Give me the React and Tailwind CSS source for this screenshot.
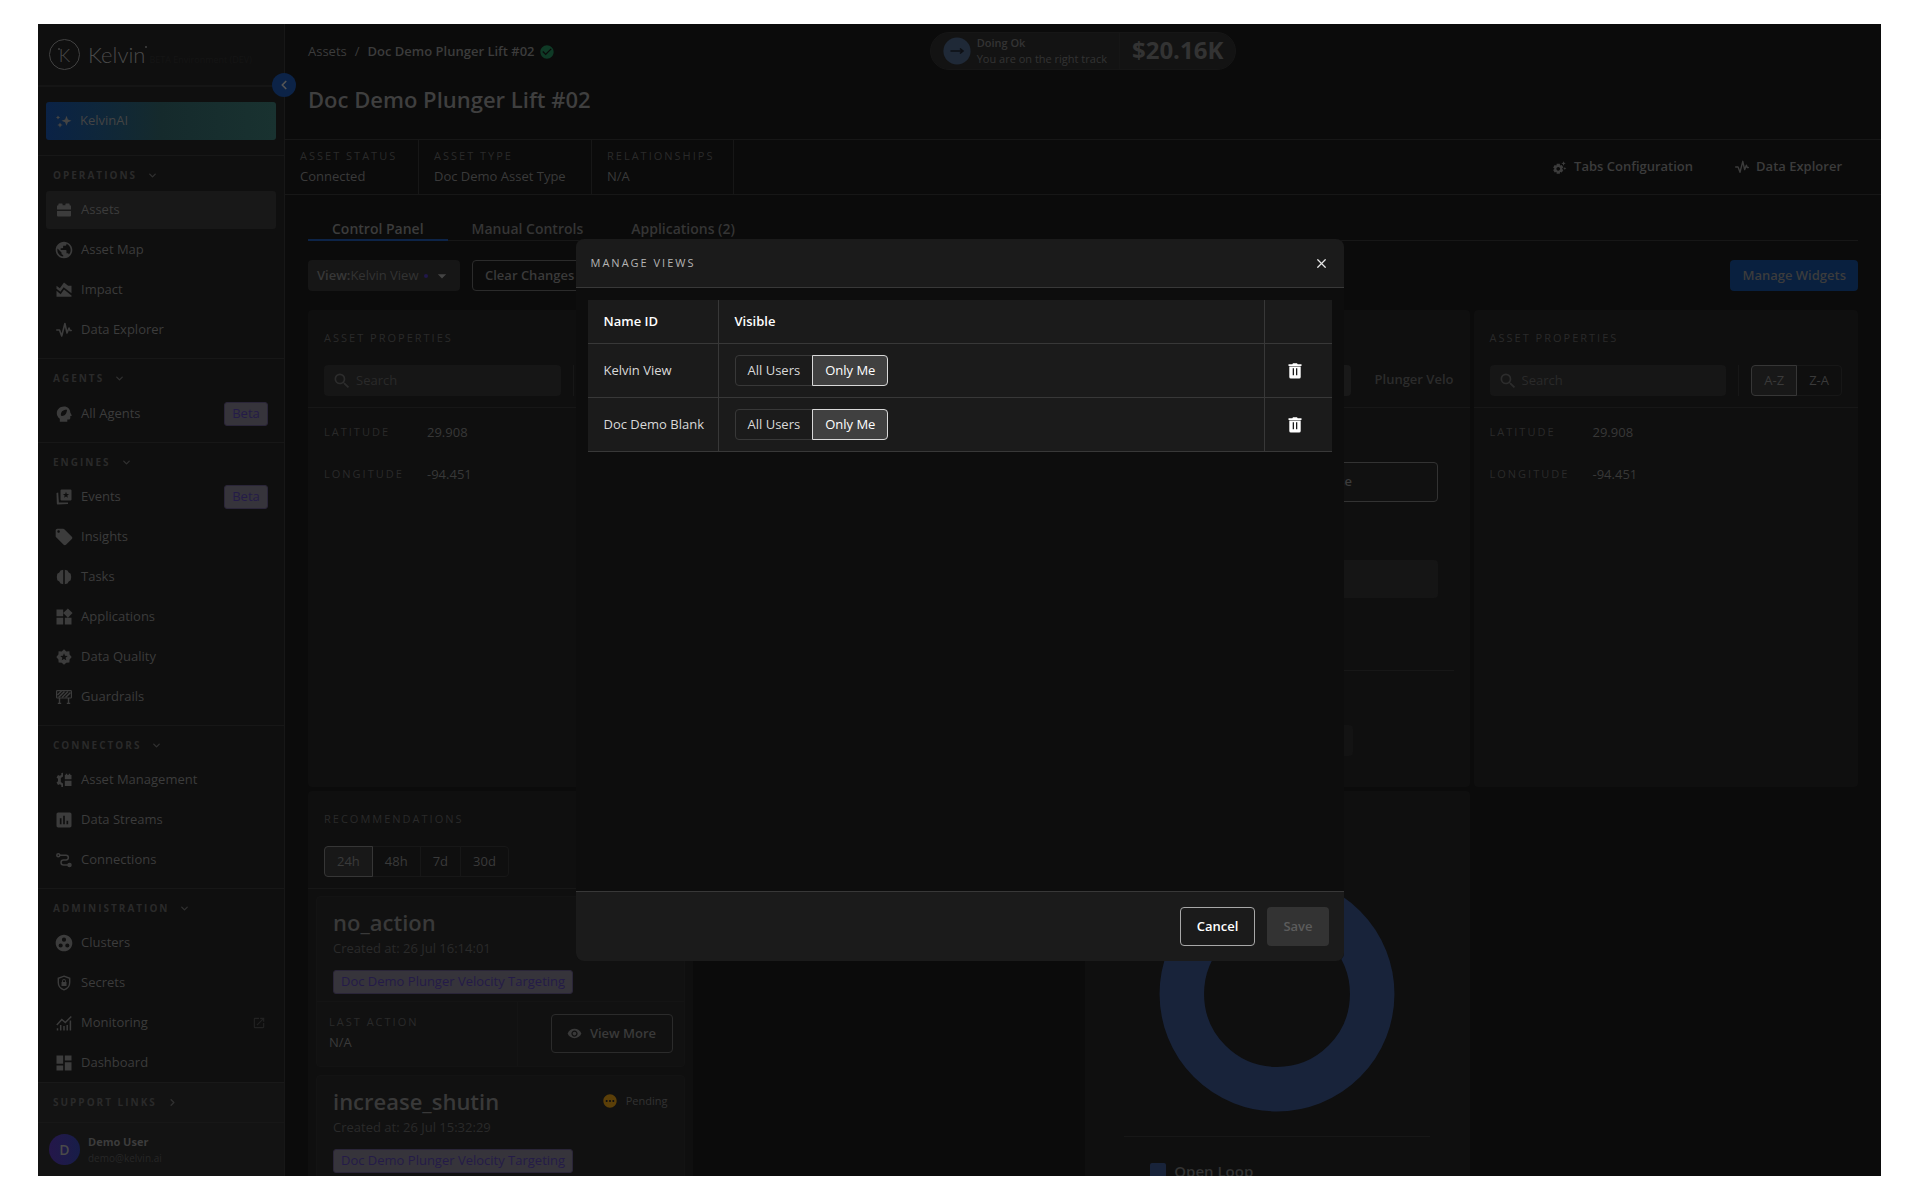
import { useState } from "react";

import clsx from "clsx";
import {
    MdAreaChart,
    MdArrowDropDown,
    MdAssessment,
    MdCheckCircle,
    MdDashboard,
    MdGroupWork,
    MdLocalOffer,
    MdOpenInNew,
    MdPending,
    MdPublic,
    MdRemoveRedEye,
    MdSearch,
    MdSettingsSuggest,
    MdWidgets,
} from "react-icons/md";
import { ChevronDown, ChevronLeft, ChevronRight, X } from "lucide-react";

function SparklesIcon({ className }) {
    return (
        <svg viewBox="0 0 16 16" className={className} fill="currentColor" aria-hidden="true">
            <path d="M10.5 2.8l1.4 3.6 3.6 1.4-3.6 1.4-1.4 3.6-1.4-3.6-3.6-1.4 3.6-1.4z" />
            <path d="M4 9.400l.9 1.900 1.900.7-1.900.8L4 14.700l-.9-1.900-1.900-.8 1.900-.7z" />
            <path d="M2 2.400l.7 1.400 1.400.7-1.400.7L2 6.600l-.7-1.400L0 4.500l1.300-.7z" />
        </svg>
    );
}

function BrickIcon({ className }) {
    return (
        <svg viewBox="0 0 16 16" className={className} fill="currentColor" aria-hidden="true">
            <path d="M3 1.500h3a.6.6 0 01.6.6v1.100h2.800V2.100a.6.6 0 01.6-.6h3a.6.6 0 01.6.6v1.100h.4a1 1 0 011 1v3.200H1V4.200a1 1 0 011-1h.4V2.100a.6.6 0 01.6-.6z" />
            <path d="M1 8.900h14v4.600a1 1 0 01-1 1H2a1 1 0 01-1-1z" />
        </svg>
    );
}

function PulseIcon({ className }) {
    return (
        <svg
            viewBox="0 0 16 16"
            className={className}
            fill="none"
            stroke="currentColor"
            strokeWidth="1.6"
            strokeLinejoin="round"
            strokeLinecap="round"
            aria-hidden="true"
        >
            <path d="M.8 8h2.700l2.200 6L8.900 1.500l2.100 9.500 2-5 1 2.500h1.200" />
        </svg>
    );
}

function AgentIcon({ className }) {
    return (
        <svg viewBox="0 0 16 16" className={className} fill="currentColor" fillRule="evenodd" aria-hidden="true">
            <path d="M8 .5c3.800 0 6.300 2.700 6.300 6l1.400 2.700c.2.4 0 .7-.4.7h-1v2.200c0 .9-.6 1.500-1.500 1.500h-1.500v2.200H3.800v-3C2 11.300.8 9.500.8 7.200.8 3.400 4 .5 8 .5zM5 9.800c3.500.6 5.700-1.600 6-6C7 3.600 4.300 5.800 5 9.800z" />
        </svg>
    );
}

function EventsIcon({ className }) {
    return (
        <svg viewBox="0 0 16 16" className={className} fill="currentColor" fillRule="evenodd" aria-hidden="true">
            <path d="M5.500.5h9a1 1 0 011 1v9a1 1 0 01-1 1h-9a1 1 0 01-1-1v-9a1 1 0 011-1zM10 2.800L9.200 5l-2.300.1 1.800 1.400-.6 2.200L10 7.400l1.900 1.300-.6-2.200 1.800-1.400-2.300-.1z" />
            <path d="M.5 4l1.700-.4.7 10H12v1.500l-10.200.4a1 1 0 01-1-1z" />
        </svg>
    );
}

function TasksIcon({ className }) {
    return (
        <svg viewBox="0 0 16 16" className={className} fill="currentColor" aria-hidden="true">
            <path d="M7.200.8v14.400L4.500 14.400l-1.200-2-2-1.200L.8 8l.5-3.200 2-1.200 1.200-2z" />
            <path d="M8.800.8v14.400l2.700-.8 1.200-2 2-1.200.5-3.200-.5-3.200-2-1.200-1.200-2z" />
        </svg>
    );
}

function QualityIcon({ className }) {
    return (
        <svg viewBox="0 0 16 16" className={className} fill="currentColor" fillRule="evenodd" aria-hidden="true">
            <path d="M8 .3l2.300 2.100 3.100-.1.200 3.200L15.700 8l-2.100 2.500-.2 3.100-3.100.1L8 15.700l-2.300-2-3.100-.1-.2-3.100L.3 8l2.100-2.500.2-3.200 3.100.1zM8 4.300l-1 2.500-2.700.2 2.100 1.700-.7 2.600L8 9.900l2.300 1.400-.7-2.600L11.700 7 9 6.800z" />
        </svg>
    );
}

function BarrierIcon({ className }) {
    return (
        <svg viewBox="0 0 16 16" className={className} fill="none" stroke="currentColor" aria-hidden="true">
            <rect x=".6" y="1.600" width="14.800" height="7.400" rx=".8" strokeWidth="1.200" />
            <path d="M1.500 6l4-4M2.500 8.500l6-6M6 8.500l6-6M9.500 8.500l5-5" strokeWidth="1.500" />
            <path d="M3.500 9v5.500M12.500 9v5.500M1.800 14.400h3.400M10.800 14.400h3.400" strokeWidth="1.400" />
        </svg>
    );
}

function AssetMgmtIcon({ className }) {
    return (
        <svg viewBox="0 0 16 16" className={className} fill="currentColor" aria-hidden="true">
            <path d="M7 .8L5.300 1v1.900L3.700 3.800 2 3 .5 5.400l1.500 1.300v2.600L.5 10.600 2 13l1.700-.8 1.600.9V15H7v-3.500L4.800 9.900V6.100L7 4.500z" />
            <path d="M8.800 3h.9V1.800h1.600V3h1.400V1.800h1.600V3h1.200v4.300H8.800zM8.800 8.800h6.700v5.300H8.800z" />
        </svg>
    );
}

function RouteIcon({ className }) {
    return (
        <svg viewBox="0 0 16 16" className={className} fill="none" stroke="currentColor" strokeWidth="1.500" aria-hidden="true">
            <circle cx="2.300" cy="3.200" r="1.500" />
            <path d="M4 3.200h6a2.300 2.300 0 010 4.700H7.500a2.500 2.500 0 000 5H12" />
            <circle cx="13.500" cy="12.900" r="1.500" fill="currentColor" />
        </svg>
    );
}

function SecretsIcon({ className }) {
    return (
        <svg viewBox="0 0 16 16" className={className} fill="currentColor" aria-hidden="true">
            <path
                d="M8 1.200l5.700 2.100v4.200c0 3.500-2.300 6.200-5.700 7.300-3.400-1.100-5.700-3.800-5.700-7.300V3.300z"
                fill="none"
                stroke="currentColor"
                strokeWidth="1.400"
            />
            <path d="M5.500 7h.6V6a1.900 1.900 0 013.800 0v1h.6v4h-5zM7 7h2V6a1 1 0 00-2 0z" fillRule="evenodd" />
        </svg>
    );
}

function MonitoringIcon({ className }) {
    return (
        <svg viewBox="0 0 16 16" className={className} fill="none" stroke="currentColor" strokeWidth="1.500" aria-hidden="true">
            <path d="M.8 10l5-5.500 3.500 3L15.300 1.500" />
            <path d="M1.500 15.500v-2.300M4.700 15.500V10M8 15.500v-4.500M11.200 15.500V10M14.400 15.500V5.500" />
        </svg>
    );
}

function TrashIcon({ className }) {
    return (
        <svg viewBox="0 0 14 16" className={className} fill="currentColor" fillRule="evenodd" aria-hidden="true">
            <path d="M.5 1.200h3.800L5 .3h4l.7.900h3.800v1.900H.5zM1.300 3.600h11.400v10.400a1.600 1.600 0 01-1.600 1.600H2.900a1.600 1.600 0 01-1.600-1.600zM4.700 5.200v7h1.300v-7zM8 5.200v7h1.300v-7z" />
        </svg>
    );
}

// `wide` marks the Material glyphs, which carry padding inside their own box
const sections = [
    {
        title: "Operations",
        items: [
            { label: "Assets", icon: BrickIcon, active: true },
            { label: "Asset Map", icon: MdPublic, wide: true },
            { label: "Impact", icon: MdAreaChart, wide: true },
            { label: "Data Explorer", icon: PulseIcon },
        ],
    },
    { title: "Agents", roomy: true, items: [{ label: "All Agents", icon: AgentIcon, beta: true }] },
    {
        title: "Engines",
        items: [
            { label: "Events", icon: EventsIcon, beta: true },
            { label: "Insights", icon: MdLocalOffer, wide: true },
            { label: "Tasks", icon: TasksIcon },
            { label: "Applications", icon: MdWidgets, wide: true },
            { label: "Data Quality", icon: QualityIcon },
            { label: "Guardrails", icon: BarrierIcon },
        ],
    },
    {
        title: "Connectors",
        items: [
            { label: "Asset Management", icon: AssetMgmtIcon },
            { label: "Data Streams", icon: MdAssessment, wide: true },
            { label: "Connections", icon: RouteIcon },
        ],
    },
    {
        title: "Administration",
        items: [
            { label: "Clusters", icon: MdGroupWork, wide: true },
            { label: "Secrets", icon: SecretsIcon },
            { label: "Monitoring", icon: MonitoringIcon, external: true },
            { label: "Dashboard", icon: MdDashboard, wide: true },
        ],
    },
];

const recommendations = [
    { name: "no_action", created: "26 Jul 16:14:01" },
    { name: "increase_shutin", created: "26 Jul 15:32:29", pending: true },
];

const views = ["Kelvin View", "Doc Demo Blank"];

function NavItem({ item }) {
    const Icon = item.icon;
    return (
        <a
            href="#"
            className={clsx(
                "flex items-center h-[38px] rounded-[3px] pl-2.5 pr-2 text-[13px] text-[#3c3c3c]",
                item.active && "bg-[#181818]"
            )}
        >
            <span className="size-4 mr-[9px] shrink-0 flex items-center justify-center">
                <Icon className={clsx("shrink-0", item.wide ? "size-5" : "size-4")} />
            </span>
            {item.label}
            {item.beta && (
                <span className="ml-auto h-6 w-11 flex items-center justify-center rounded-[3px] border border-[#2a2538] bg-[#36343b] text-[#241b48]">
                    Beta
                </span>
            )}
            {item.external && <MdOpenInNew className="ml-auto mr-0.5 size-3.5 text-[#222]" />}
        </a>
    );
}

function Sidebar() {
    return (
        <aside className="relative z-10 w-[247px] shrink-0 flex flex-col bg-[#0f0f0f] border-r border-[#171717]">
            <div className="h-[61px] shrink-0 flex items-center pl-[11px]">
                <span className="relative size-[31px] rounded-full border border-[#424242] flex items-center justify-center font-[Lato,sans-serif] text-lg font-light text-[#4a4a4a]">
                    K
                    <i className="absolute left-2 top-2 size-0.5 rounded-full bg-[#424242]" />
                </span>
                <span className="relative ml-2 font-[Lato,sans-serif] text-[22px] font-light text-[#4a4a4a]">
                    Kelvin
                    <i className="absolute -right-0.5 top-2 size-0.5 rounded-full bg-[#424242]" />
                </span>
                <span className="ml-1 mt-2.5 text-[9px] text-[#151515] whitespace-nowrap">BETA Environment (DEV)</span>
            </div>
            <div className="h-[70px] shrink-0 px-2 pt-[15px] border-t-2 border-[#151515]">
                <a
                    href="#"
                    className="flex items-center h-[38px] rounded-[3px] pl-2.5 text-[13px] text-[#444] bg-linear-to-r from-[#0a2246] via-[#152a2c] to-[#193230]"
                >
                    <SparklesIcon className="size-4 mr-2" />
                    KelvinAI
                </a>
            </div>
            <button
                type="button"
                aria-label="Collapse sidebar"
                className="absolute -right-3 top-[49px] size-6 rounded-full bg-[#0c2347] flex items-center justify-center"
            >
                <ChevronLeft size={14} strokeWidth={3} className="text-[#555]" />
            </button>
            <nav className="flex-1 min-h-0 overflow-hidden">
                {sections.map((section) => (
                    <div key={section.title} className="border-t border-[#171717] px-2 pb-[9px]">
                        <button
                            type="button"
                            className={clsx(
                                "flex items-center pl-[7px] text-[10px] font-bold uppercase tracking-[2px] text-[#2a2a2a]",
                                section.roomy ? "h-9 pt-0.5" : "h-[35px] pt-1"
                            )}
                        >
                            {section.title}
                            <ChevronDown size={11} strokeWidth={3} className="ml-2.5 text-[#303030]" />
                        </button>
                        <div className="flex flex-col gap-0.5">
                            {section.items.map((item) => (
                                <NavItem key={item.label} item={item} />
                            ))}
                        </div>
                    </div>
                ))}
            </nav>
            <div className="shrink-0 bg-[#131313] border-t border-[#191919]">
                <button
                    type="button"
                    className="flex items-center h-[39px] pl-[15px] text-[10px] font-bold uppercase tracking-[2px] text-[#2a2a2a]"
                >
                    Support Links
                    <ChevronRight size={11} strokeWidth={3} className="ml-2.5 text-[#303030]" />
                </button>
                <div className="h-[54px] flex items-center pl-[11px] border-t border-[#171717]">
                    <span className="size-[31px] rounded-full bg-linear-to-r from-[#24174a] to-[#171d48] flex items-center justify-center text-sm font-semibold text-[#4a4a4a]">
                        D
                    </span>
                    <div className="ml-2">
                        <p className="text-[11px] leading-4 font-bold text-[#3c3c3c]">Demo User</p>
                        <p className="text-[10px] leading-4 text-[#272727]">demo@kelvin.ai</p>
                    </div>
                </div>
            </div>
        </aside>
    );
}

function Label({ children }) {
    return <p className="text-[11px] leading-4 uppercase tracking-[2px] text-[#2a2a2a] whitespace-nowrap">{children}</p>;
}

function Header() {
    const info = [
        ["Asset Status", "Connected", "w-[134px]"],
        ["Asset Type", "Doc Demo Asset Type", "w-[173px]"],
        ["Relationships", "N/A", "w-[142px]"],
    ];

    return (
        <header>
            <div className="grid grid-cols-[1fr_auto_1fr] items-start h-[115px] px-[23px] pt-2">
                <div>
                    <nav className="flex items-center h-10 text-[13px] text-[#3c3c3c]">
                        <a href="#">Assets</a>
                        <span className="mx-2">/</span>
                        <span className="font-semibold">Doc Demo Plunger Lift #02</span>
                        <MdCheckCircle className="ml-1 size-4 text-[#0f3a26]" />
                    </nav>
                    <h1 className="mt-[11px] text-[22px] leading-8 font-semibold text-[#3f3f3f]">Doc Demo Plunger Lift #02</h1>
                </div>
                <div className="flex items-center h-[38px] rounded-full bg-[#131313] border border-[#161616] px-3">
                    <svg viewBox="0 0 28 28" className="size-7" aria-hidden="true">
                        <circle cx="14" cy="14" r="13.600" fill="#1f2937" />
                        <path d="M7.500 14h12M17 11.500l3 2.500-3 2.500" fill="none" stroke="#0d0f14" strokeWidth="1.600" />
                    </svg>
                    <div className="ml-1.5 pr-3 text-[11px] leading-4 text-[#333]">
                        <p className="font-semibold">Doing Ok</p>
                        <p>You are on the right track</p>
                    </div>
                    <span className="h-9 border-l border-[#161616] pl-3 text-2xl leading-[34px] font-bold text-[#333]">$20.16K</span>
                </div>
            </div>
            <div className="flex items-center h-14 border-y border-[#171717]">
                {info.map(([label, value, width]) => (
                    <div key={label} className={clsx("h-full pl-[15px] pt-2 border-r border-[#171717]", width)}>
                        <Label>{label}</Label>
                        <p className="mt-0.5 text-[13px] leading-5 text-[#3a3a3a] whitespace-nowrap">{value}</p>
                    </div>
                ))}
                <div className="ml-auto mr-[39px] flex items-center gap-[42px] text-[13px] font-semibold text-[#3c3c3c]">
                    <button type="button" className="flex items-center gap-[7px]">
                        <MdSettingsSuggest className="size-[15px]" />
                        Tabs Configuration
                    </button>
                    <button type="button" className="flex items-center gap-[7px]">
                        <PulseIcon className="size-3.5" />
                        Data Explorer
                    </button>
                </div>
            </div>
        </header>
    );
}

function Segmented({ options, active }) {
    return (
        <div className="flex h-[31px] text-[13px] text-[#3a3a3a]">
            {options.map((option) => (
                <button
                    key={option}
                    type="button"
                    className={clsx(
                        "px-3 border -ml-px first:ml-0 first:rounded-l last:rounded-r",
                        option === active ? "relative bg-[#181818] border-[#363636]" : "border-[#171717]"
                    )}
                >
                    {option}
                </button>
            ))}
        </div>
    );
}

function Widget({ className, children }) {
    return <section className={clsx("min-w-0 rounded bg-[#0f0f0f]", className)}>{children}</section>;
}

function AssetProperties() {
    return (
        <Widget>
            <div className="h-[98px] px-4 pt-5 border-b border-[#171717]">
                <Label>Asset Properties</Label>
                <div className="mt-[19px] flex items-center">
                    <label className="flex-1 min-w-0 flex items-center h-[31px] rounded bg-[#161616] pl-2">
                        <MdSearch className="size-5 shrink-0 text-[#2c2c2c]" />
                        <input
                            type="text"
                            aria-label="Search"
                            placeholder="Search"
                            className="ml-1 w-full bg-transparent outline-none text-[13px] placeholder:text-[#2a2a2a]"
                        />
                    </label>
                    <span className="mx-3 h-[31px] border-l border-[#171717]" />
                    <Segmented options={["A-Z", "Z-A"]} active="A-Z" />
                </div>
            </div>
            <dl className="grid grid-cols-[103px_1fr] gap-y-[22px] px-4 pt-3.5 items-center text-[13px] leading-5 text-[#383838]">
                <dt>
                    <Label>Latitude</Label>
                </dt>
                <dd>29.908</dd>
                <dt>
                    <Label>Longitude</Label>
                </dt>
                <dd>-94.451</dd>
            </dl>
        </Widget>
    );
}

function ControlChange() {
    return (
        <Widget>
            <div className="flex justify-end items-center h-[98px] pr-4 pt-[43px] border-b border-[#171717] text-[13px] font-semibold text-[#2c2c2c]">
                <span className="w-24 h-[31px] mr-6 rounded bg-[#191919]" />
                <span>Plunger Velo</span>
            </div>
            <div className="pl-[148px] pr-8 pt-[54px]">
                <button
                    type="button"
                    className="w-full h-10 rounded border border-[#333] bg-[#111] text-[13px] font-semibold text-[#3c3c3c]"
                >
                    Close
                </button>
                <input type="text" aria-label="New value" className="mt-[58px] w-full h-[38px] rounded bg-[#151515]" />
            </div>
            <div className="mt-[72px] mx-4 pt-[54px] border-t border-[#171717]">
                <span className="block ml-auto mr-[101px] w-24 h-[31px] rounded bg-[#131313]" />
            </div>
        </Widget>
    );
}

function Recommendation({ item }) {
    return (
        <article className="rounded border border-[#131313] bg-[#111]">
            <div className="h-[105px] px-4 pt-[9px] border-b border-[#141414]">
                <div className="flex items-center justify-between">
                    <h2 className="text-[22px] leading-8 font-semibold text-[#393939]">{item.name}</h2>
                    {item.pending && (
                        <span className="flex items-center text-[11px] text-[#333]">
                            <MdPending className="size-4 mr-2 text-[#5b3f08]" />
                            Pending
                        </span>
                    )}
                </div>
                <p className="mt-px text-[13px] leading-[18px] text-[#2a2a2a]">Created at: {item.created}</p>
                <span className="mt-[13px] flex w-fit items-center h-6 rounded-[3px] border border-[#2a2538] bg-[#36343b] px-[7px] text-[13px] text-[#241b48] whitespace-nowrap">
                    Doc Demo Plunger Velocity Targeting
                </span>
            </div>
            <div className="flex h-16">
                <div className="w-[201px] pl-3 pt-3 border-r border-[#141414]">
                    <Label>Last Action</Label>
                    <p className="mt-0.5 text-[13px] leading-5 text-[#3a3a3a]">N/A</p>
                </div>
                <button
                    type="button"
                    className="ml-auto mr-[11px] mt-3 h-[39px] w-[122px] flex items-center justify-center gap-2 rounded border border-[#2b2b2b] text-[13px] font-semibold text-[#3a3a3a]"
                >
                    <MdRemoveRedEye className="size-[15px]" />
                    View More
                </button>
            </div>
        </article>
    );
}

function Recommendations() {
    return (
        <Widget>
            <div className="h-[98px] px-4 pt-5 border-b border-[#171717]">
                <Label>Recommendations</Label>
                <div className="mt-[19px]">
                    <Segmented options={["24h", "48h", "7d", "30d"]} active="24h" />
                </div>
            </div>
            <div className="flex flex-col gap-2 px-2 pt-[7px]">
                {recommendations.map((item) => (
                    <Recommendation key={item.name} item={item} />
                ))}
            </div>
        </Widget>
    );
}

function LoopStatus() {
    return (
        <Widget className="flex flex-col items-center pt-[85px]">
            <svg viewBox="0 0 236 236" className="size-[236px]" role="img" aria-label="Loop status">
                <circle cx="118" cy="118" r="95.200" fill="none" stroke="#18233a" strokeWidth="44.500" />
            </svg>
            <div className="mt-6 w-[306px] border-t border-[#171717] pt-6 pl-[26px]">
                <p className="flex items-center text-[15px] leading-5 font-semibold text-[#333]">
                    <span className="size-4 mr-2 rounded-[2px] bg-[#18233a]" />
                    Open Loop
                </p>
            </div>
        </Widget>
    );
}

function ControlPanel() {
    const tabs = ["Control Panel", "Manual Controls", "Applications (2)"];

    return (
        <div className="px-[23px]">
            <div className="flex h-[46px] pt-[23px] border-b border-[#171717] text-[14px] font-semibold text-[#353535]">
                {tabs.map((tab, i) => (
                    <button
                        key={tab}
                        type="button"
                        className={clsx(
                            "px-6 -mb-px border-b-2",
                            i === 0 ? "border-[#0d2448] text-[#3c3c3c]" : "border-transparent"
                        )}
                    >
                        {tab}
                    </button>
                ))}
            </div>
            <div className="flex mt-[19px] h-[31px] text-[13px]">
                <div className="flex items-center w-[152px] rounded bg-[#161616] pl-[9px] text-[#383838]">
                    <label htmlFor="view" className="font-semibold">
                        View:
                    </label>
                    <select id="view" className="appearance-none outline-none bg-transparent w-[74px] text-[#333]">
                        <option>Kelvin View</option>
                    </select>
                    <span className="size-1 rounded-full bg-[#21184a]" />
                    <MdArrowDropDown className="ml-1 size-5 text-[#444]" />
                </div>
                <button type="button" className="ml-3 px-3 rounded border border-[#2b2b2b] font-semibold text-[#3a3a3a]">
                    Clear Changes
                </button>
                <button type="button" className="ml-auto px-3 rounded bg-[#09203f] font-semibold text-[#3c3c3c]">
                    Manage Widgets
                </button>
            </div>
            <div className="mt-[19px] grid grid-cols-4 gap-[4px] auto-rows-[477px]">
                <AssetProperties />
                <Widget />
                <ControlChange />
                <AssetProperties />
                <Recommendations />
                <div />
                <LoopStatus />
            </div>
        </div>
    );
}

function VisibilityToggle({ value, onChange }) {
    return (
        <div className="flex h-[31px]">
            {["All Users", "Only Me"].map((option) => (
                <button
                    key={option}
                    type="button"
                    onClick={() => onChange(option)}
                    className={clsx(
                        "border px-3 first:rounded-l last:rounded-r last:-ml-px",
                        option === value ? "relative bg-[#404040] border-[#d8d8d8] text-white" : "border-[#383838] text-[#d9d9d9]"
                    )}
                >
                    {option}
                </button>
            ))}
        </div>
    );
}

function ManageViews() {
    const [visibility, setVisibility] = useState(views.map(() => "Only Me"));

    const changeVisibility = (index, value) => {
        setVisibility(visibility.map((v, i) => (i === index ? value : v)));
    };

    return (
        <div
            role="dialog"
            aria-labelledby="manage-views"
            className="w-[768px] h-[722px] flex flex-col rounded-lg overflow-hidden bg-[#0d0d0d]"
        >
            <div className="flex items-center justify-between h-[49px] shrink-0 px-[15px] bg-[#1b1b1b] border-b border-[#383838]">
                <h2 id="manage-views" className="text-[11px] uppercase tracking-[2px] text-[#b4b4b4]">
                    Manage Views
                </h2>
                <button type="button" aria-label="Close" className="text-[#e6e6e6]">
                    <X size={15} />
                </button>
            </div>
            <div className="flex-1 p-3">
                <table className="w-full bg-[#1b1b1b] border-separate border-spacing-0 text-left text-[13px] text-[#d9d9d9]">
                    <thead>
                        <tr className="h-11 text-white">
                            <th className="w-[131px] pl-4 font-semibold border-b border-r border-[#383838]">Name ID</th>
                            <th className="pl-4 font-semibold border-b border-r border-[#383838]">Visible</th>
                            <td className="w-[67px] border-b border-[#383838]" />
                        </tr>
                    </thead>
                    <tbody>
                        {views.map((view, i) => (
                            <tr key={view} className="h-[54px]">
                                <td className="pl-4 border-b border-r border-[#383838] whitespace-nowrap">{view}</td>
                                <td className="pl-4 border-b border-r border-[#383838]">
                                    <VisibilityToggle value={visibility[i]} onChange={(value) => changeVisibility(i, value)} />
                                </td>
                                <td className="pl-[23px] border-b border-[#383838]">
                                    <button type="button" aria-label={`Delete ${view}`} className="block text-white">
                                        <TrashIcon className="w-3.5 h-4" />
                                    </button>
                                </td>
                            </tr>
                        ))}
                    </tbody>
                </table>
            </div>
            <div className="flex items-center justify-end gap-3 h-[70px] shrink-0 px-[15px] bg-[#1b1b1b] border-t border-[#383838] text-[13px] font-semibold">
                <button type="button" className="h-[39px] px-4 rounded border border-[#a8a8a8] text-white">
                    Cancel
                </button>
                <button type="button" disabled className="h-[39px] px-4 rounded bg-[#333] text-[#5c5c5c]">
                    Save
                </button>
            </div>
        </div>
    );
}

function App() {
    return (
        <div className="h-screen bg-white py-6 pl-[38px] pr-[39px] font-['Open_Sans',sans-serif]">
            <div className="relative flex h-full overflow-hidden bg-[#0b0b0b]">
                <Sidebar />
                <main className="flex-1 min-w-0">
                    <Header />
                    <ControlPanel />
                </main>
                <div className="absolute inset-0 z-20 flex items-center justify-center">
                    <ManageViews />
                </div>
            </div>
        </div>
    );
}

export default App;
